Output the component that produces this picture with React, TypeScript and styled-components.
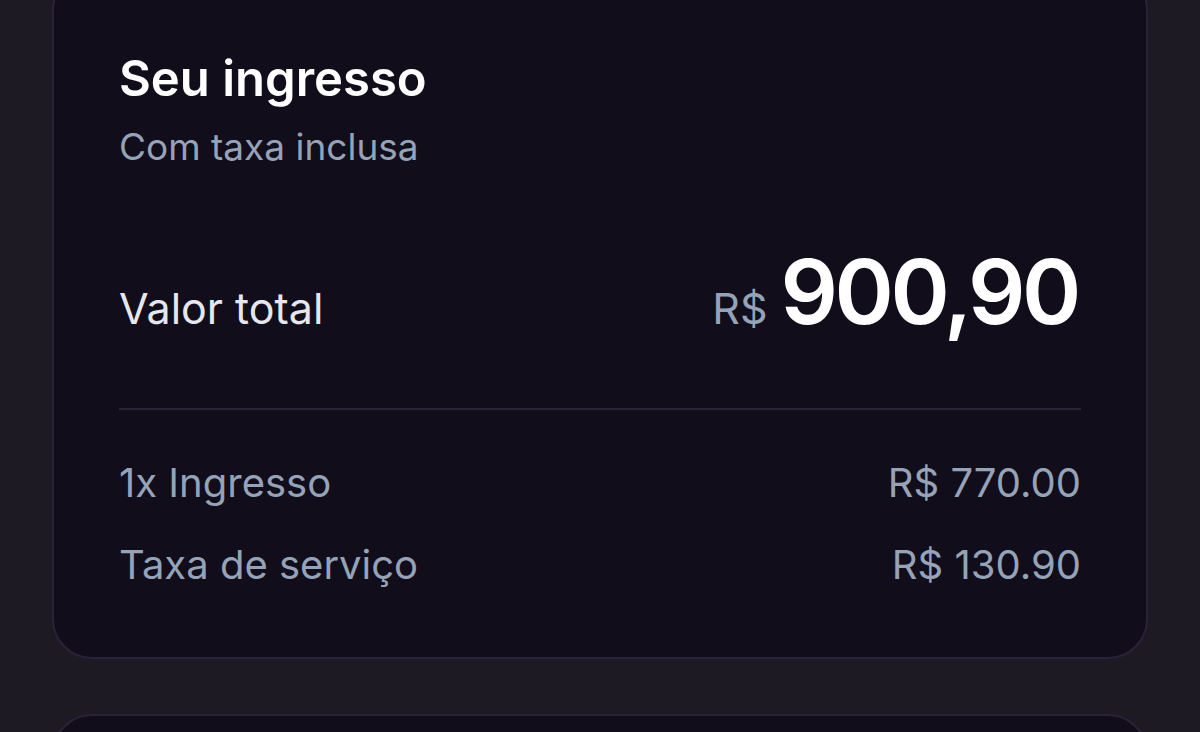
import React from 'react';
import styled, { createGlobalStyle } from 'styled-components';

const GlobalStyle = createGlobalStyle`
  html, body {
    margin: 0;
    padding: 0;
    background: #1e1a23;
    overflow: hidden;
  }
  body {
    font-family: Inter, "Noto Sans", sans-serif;
    -webkit-font-smoothing: antialiased;
  }
`;

const Page = styled.div`
  width: 1200px;
  height: 732px;
  overflow: hidden;
  display: flex;
  flex-direction: column;
  gap: 55px;
  padding: 0 52px;
  box-sizing: border-box;
`;

const Card = styled.section<{ $offset?: number; $height?: number }>`
  flex-shrink: 0;
  margin-top: ${({ $offset }) => $offset ?? 0}px;
  ${({ $height }) => ($height ? `height: ${$height}px;` : '')}
  background: #120d1b;
  border: 2px solid #2a2238;
  border-radius: 40px;
  padding: 0 65px;
  box-sizing: border-box;
`;

const Header = styled.div`
  display: flex;
  flex-direction: column;
  gap: 16px;
  padding-top: 78px;
`;

const Title = styled.h2`
  margin: 0;
  font-size: 49px;
  font-weight: 600;
  color: #ffffff;
  line-height: 58px;
`;

const Subtitle = styled.p`
  margin: 0;
  font-size: 37px;
  font-weight: 400;
  color: #94a3b8;
  line-height: 46px;
`;

const TotalRow = styled.div`
  display: flex;
  justify-content: space-between;
  align-items: baseline;
  padding: 76px 0 70px;
  border-bottom: 2px solid #2a2238;
`;

const TotalLabel = styled.span`
  font-size: 43px;
  color: #e5e7ef;
`;

const Amount = styled.div`
  display: flex;
  align-items: baseline;
  gap: 13px;
`;

const Currency = styled.span`
  font-size: 43px;
  color: #94a3b8;
`;

const Value = styled.span`
  font-size: 90px;
  font-weight: 600;
  letter-spacing: -3.5px;
  margin-right: 3px;
  color: #ffffff;
  line-height: 92px;
`;

const Lines = styled.div`
  display: flex;
  flex-direction: column;
  gap: 30px;
  padding: 47px 0 66px;
`;

const Line = styled.div`
  display: flex;
  justify-content: space-between;
  align-items: baseline;
  font-size: 40px;
  line-height: 52px;
  color: #94a3b8;
`;

export default function App() {
  return (
    <>
      <GlobalStyle />
      <Page>
        <Card $offset={-30}>
          <Header>
            <Title>Seu ingresso</Title>
            <Subtitle>Com taxa inclusa</Subtitle>
          </Header>
          <TotalRow>
            <TotalLabel>Valor total</TotalLabel>
            <Amount>
              <Currency>R$</Currency>
              <Value>900,90</Value>
            </Amount>
          </TotalRow>
          <Lines>
            <Line>
              <span>1x Ingresso</span>
              <span>R$ 770.00</span>
            </Line>
            <Line>
              <span>Taxa de serviço</span>
              <span>R$ 130.90</span>
            </Line>
          </Lines>
        </Card>
        <Card $height={300} />
      </Page>
    </>
  );
}
